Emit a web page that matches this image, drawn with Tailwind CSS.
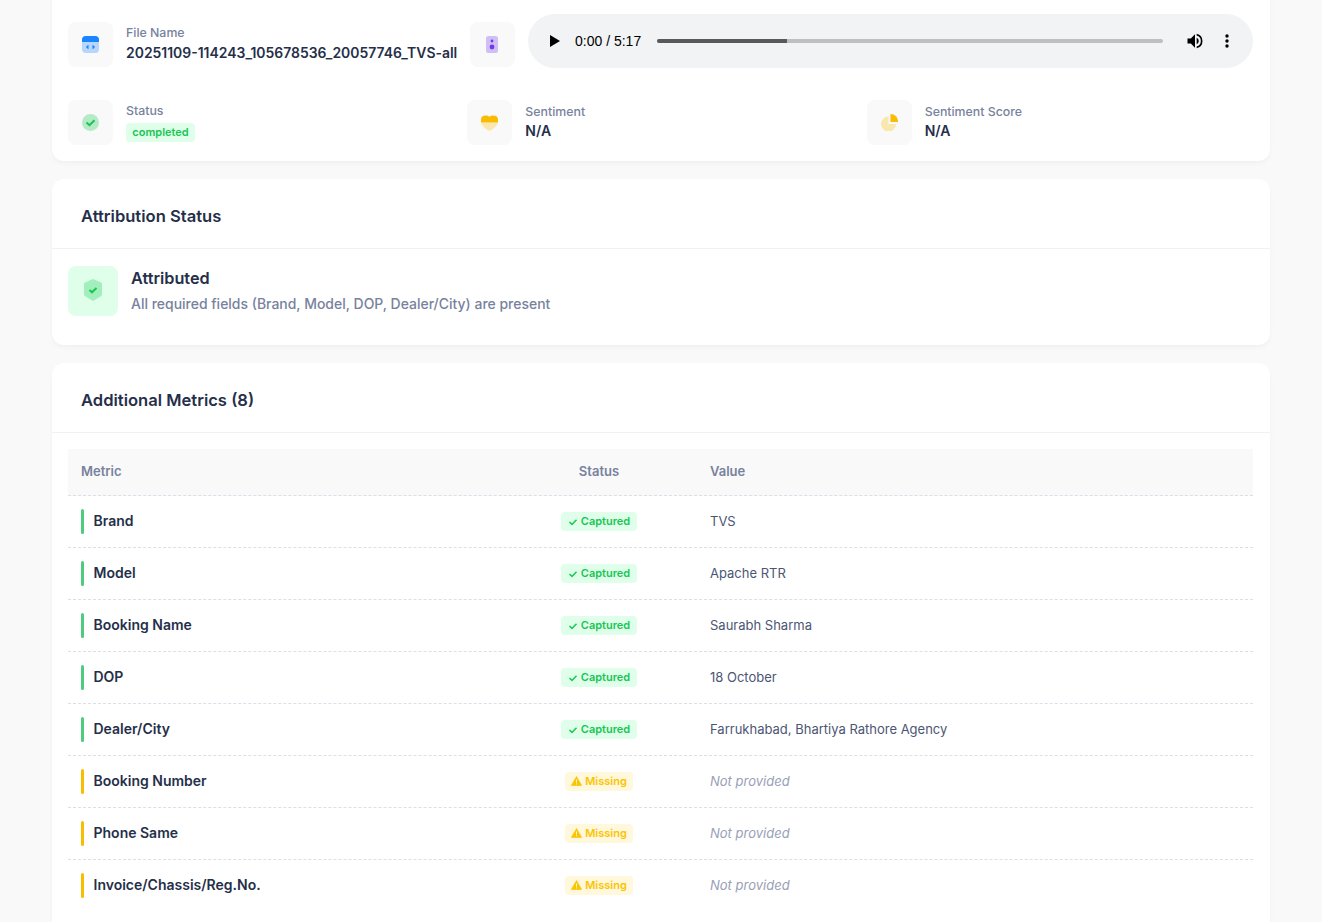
<!DOCTYPE html>
<html lang="en">
<head>
    <meta charset="UTF-8">
    <title>Call Details</title>
    <script src="https://cdn.jsdelivr.net/npm/@tailwindcss/browser@4"></script>
</head>
<body class="bg-[#f9f9f9] font-['Inter',sans-serif] text-[#252f4a] h-[922px] overflow-hidden">
    <div class="mx-[52px] w-[1218px]">

        <!-- Call info card -->
        <div class="-mt-[20px] bg-white rounded-xl shadow-[0_3px_4px_rgba(0,0,0,0.03)] pl-4 pr-[17px] pt-[34px] pb-4">
            <div class="flex items-center h-[54px]">
                <div class="mt-[7px] w-[45px] h-[45px] rounded-lg bg-[#f9f9f9] flex items-center justify-center shrink-0">
                    <svg width="17" height="17" viewBox="0 0 17 17"><rect width="17" height="17" rx="4" fill="#1b84ff" fill-opacity=".3"/><path d="M0 6V4a4 4 0 0 1 4-4h9a4 4 0 0 1 4 4v2z" fill="#1b84ff"/><path d="M6.500 9.500 5 11l1.500 1.500M10.500 9.500 12 11l-1.500 1.500" stroke="#1b84ff" stroke-width="1.500" fill="none"/></svg>
                </div>
                <div class="mt-[6px] ml-[13px] w-[343px] shrink-0">
                    <div class="text-[12.35px] font-medium leading-[16px] text-[#78829d]">File Name</div>
                    <div class="text-[13.95px] font-semibold leading-[20px] mt-[2px] whitespace-nowrap">20251109-114243_105678536_20057746_TVS-all</div>
                </div>
                <div class="mt-[7px] w-[45px] h-[45px] rounded-lg bg-[#f9f9f9] flex items-center justify-center shrink-0 ml-[1px]">
                    <svg class="-ml-[2px]" width="12" height="17" viewBox="0 0 12 17"><rect width="12" height="17" rx="2.500" fill="#7239ea" fill-opacity=".3"/><circle cx="6" cy="5" r="1.400" fill="#7239ea"/><circle cx="6" cy="11" r="2.400" fill="#7239ea"/></svg>
                </div>
                <!-- Audio player -->
                <div class="ml-[13px] w-[725px] h-[54px] rounded-[27px] bg-[#f1f3f4] flex items-center font-['Liberation_Sans',sans-serif] text-black">
                    <svg class="ml-[22px]" width="10" height="12" viewBox="0 0 10 12"><path d="M0 0v12l10-6z" fill="#000"/></svg>
                    <span class="ml-[15px] text-sm leading-none whitespace-nowrap w-[66px]">0:00 / 5:17</span>
                    <div class="ml-4 w-[506px] h-1 rounded-full bg-[#bfbfbf] overflow-hidden">
                        <div class="w-[130px] h-1 bg-[#595959]"></div>
                    </div>
                    <svg class="ml-[22px]" width="20" height="20" viewBox="0 0 24 24"><path d="M3 9v6h4l5 5V4L7 9zm13.500 3A4.500 4.500 0 0 0 14 7.970v8.050A4.500 4.500 0 0 0 16.500 12zM14 3.230v2.060a7 7 0 0 1 0 13.420v2.060a9 9 0 0 0 0-17.540z" fill="#000"/></svg>
                    <svg class="ml-[20px]" width="4" height="14" viewBox="0 0 4 14"><circle cx="2" cy="2" r="1.700"/><circle cx="2" cy="7" r="1.700"/><circle cx="2" cy="12" r="1.700"/></svg>
                </div>
            </div>
            <div class="grid grid-cols-3 gap-[13px] mt-[32px]">
                <div class="flex items-center">
                    <div class="w-[45px] h-[45px] rounded-lg bg-[#f9f9f9] flex items-center justify-center shrink-0">
                        <svg width="17" height="17" viewBox="0 0 17 17"><circle cx="8.500" cy="8.500" r="8.500" fill="#17c653" fill-opacity=".3"/><path d="m4.500 8.500 3 2.700 5-5" stroke="#17c653" stroke-width="2" fill="none"/></svg>
                    </div>
                    <div class="ml-[13px]">
                        <div class="text-[12.35px] font-medium leading-[16px] text-[#78829d]">Status</div>
                        <div class="mt-[4px] h-[19px] w-[69px] rounded bg-[#dfffea] text-[#17c653] text-[11px] font-semibold leading-[19px] text-center">completed</div>
                    </div>
                </div>
                <div class="flex items-center">
                    <div class="w-[45px] h-[45px] rounded-lg bg-[#f9f9f9] flex items-center justify-center shrink-0">
                        <svg width="17" height="16" viewBox="0 0 17 16"><path d="M0 7.500h17c-.5 3-4.500 6.500-8.500 8.500C4.500 14 .5 10.500 0 7.500z" fill="#f8bc00" fill-opacity=".3"/><path d="M0 7.500V4.500C0 2 2 .5 4.500.5c1.700 0 3 .4 4 1.200 1-.8 2.300-1.200 4-1.200C15 .5 17 2 17 4.500v3z" fill="#f8bc00"/></svg>
                    </div>
                    <div class="ml-[13px]">
                        <div class="text-[12.35px] font-medium leading-[16px] text-[#78829d]">Sentiment</div>
                        <div class="text-sm font-semibold leading-[20px] mt-[1px]">N/A</div>
                    </div>
                </div>
                <div class="flex items-center">
                    <div class="w-[45px] h-[45px] rounded-lg bg-[#f9f9f9] flex items-center justify-center shrink-0">
                        <svg width="17" height="17" viewBox="0 0 17 17"><path d="M7.500 2.500a7.500 7.500 0 1 0 7.500 7.500H7.500z" fill="#f8bc00" fill-opacity=".3"/><path d="M9.500 0A7.500 7.500 0 0 1 17 8H9.500z" fill="#f8bc00"/></svg>
                    </div>
                    <div class="ml-[13px]">
                        <div class="text-[12.35px] font-medium leading-[16px] text-[#78829d]">Sentiment Score</div>
                        <div class="text-sm font-semibold leading-[20px] mt-[1px]">N/A</div>
                    </div>
                </div>
            </div>
        </div>

        <!-- Attribution Status -->
        <div class="mt-[18px] h-[166px] bg-white rounded-xl shadow-[0_3px_4px_rgba(0,0,0,0.03)]">
            <div class="h-[70px] px-[29px] pt-[6px] flex items-center border-b border-[#f1f1f4]">
                <h3 class="text-[16.575px] font-semibold">Attribution Status</h3>
            </div>
            <div class="flex px-4 pt-[17px]">
                <div class="w-[50px] h-[50px] rounded-lg bg-[#dfffea] flex items-center justify-center shrink-0">
                    <svg class="-mt-[2px]" width="18" height="22" viewBox="0 0 18 22"><path d="M9 0l8 3.500a1.500 1.500 0 0 1 1 1.400v10.600a2 2 0 0 1-.8 1.500L9 22 .8 17A2 2 0 0 1 0 15.500V4.900a1.500 1.500 0 0 1 1-1.400z" fill="#17c653" fill-opacity=".3"/><path d="m5.500 11 2.500 2.300 4.500-4.300" stroke="#17c653" stroke-width="2" fill="none"/></svg>
                </div>
                <div class="ml-[13px]">
                    <div class="text-[16.25px] font-semibold leading-[24px]">Attributed</div>
                    <div class="text-[13.975px] font-medium text-[#78829d] leading-[20px] mt-[4px]">All required fields (Brand, Model, DOP, Dealer/City) are present</div>
                </div>
            </div>
        </div>

        <!-- Additional Metrics -->
        <div class="mt-[18px] bg-white rounded-xl shadow-[0_3px_4px_rgba(0,0,0,0.03)]">
            <div class="h-[70px] px-[29px] pt-[6px] flex items-center border-b border-[#f1f1f4]">
                <h3 class="text-[16.575px] font-semibold">Additional Metrics (8)</h3>
            </div>
            <div class="pl-4 pr-[17px] pt-4 pb-10">
                <div class="grid grid-cols-[433px_196px_1fr] h-[47px] items-center bg-[#f9f9f9] border-b border-dashed border-[#dbdfe9] text-[13px] font-semibold text-[#78829d]">
                    <div class="pl-[13px]">Metric</div>
                    <div class="text-center">Status</div>
                    <div class="pl-[13px]">Value</div>
                </div>

                <div class="grid grid-cols-[433px_196px_1fr] h-[52px] items-center border-b border-dashed border-[#dbdfe9]">
                    <div class="pl-[13px] flex items-center"><span class="w-[3px] h-[25px] rounded-sm bg-[#4fcb80]"></span><span class="ml-[9.5px] -mt-[2px] text-sm font-semibold">Brand</span></div>
                    <div class="flex justify-center"><span class="h-[19px] rounded bg-[#dfffea] text-[#17c653] text-[11px] font-semibold px-[7px] flex items-center gap-[3px]"><svg width="10" height="10" viewBox="0 0 10 10"><path d="m1.500 5 2.500 2.400 4.500-4.600" stroke="#17c653" stroke-width="1.500" fill="none"/></svg>Captured</span></div>
                    <div class="pl-[13px] text-[13px] text-[#4b5675]">TVS</div>
                </div>
                <div class="grid grid-cols-[433px_196px_1fr] h-[52px] items-center border-b border-dashed border-[#dbdfe9]">
                    <div class="pl-[13px] flex items-center"><span class="w-[3px] h-[25px] rounded-sm bg-[#4fcb80]"></span><span class="ml-[9.5px] -mt-[2px] text-sm font-semibold">Model</span></div>
                    <div class="flex justify-center"><span class="h-[19px] rounded bg-[#dfffea] text-[#17c653] text-[11px] font-semibold px-[7px] flex items-center gap-[3px]"><svg width="10" height="10" viewBox="0 0 10 10"><path d="m1.500 5 2.500 2.400 4.500-4.600" stroke="#17c653" stroke-width="1.500" fill="none"/></svg>Captured</span></div>
                    <div class="pl-[13px] text-[13px] text-[#4b5675]">Apache RTR</div>
                </div>
                <div class="grid grid-cols-[433px_196px_1fr] h-[52px] items-center border-b border-dashed border-[#dbdfe9]">
                    <div class="pl-[13px] flex items-center"><span class="w-[3px] h-[25px] rounded-sm bg-[#4fcb80]"></span><span class="ml-[9.5px] -mt-[2px] text-sm font-semibold">Booking Name</span></div>
                    <div class="flex justify-center"><span class="h-[19px] rounded bg-[#dfffea] text-[#17c653] text-[11px] font-semibold px-[7px] flex items-center gap-[3px]"><svg width="10" height="10" viewBox="0 0 10 10"><path d="m1.500 5 2.500 2.400 4.500-4.600" stroke="#17c653" stroke-width="1.500" fill="none"/></svg>Captured</span></div>
                    <div class="pl-[13px] text-[13px] text-[#4b5675]">Saurabh Sharma</div>
                </div>
                <div class="grid grid-cols-[433px_196px_1fr] h-[52px] items-center border-b border-dashed border-[#dbdfe9]">
                    <div class="pl-[13px] flex items-center"><span class="w-[3px] h-[25px] rounded-sm bg-[#4fcb80]"></span><span class="ml-[9.5px] -mt-[2px] text-sm font-semibold">DOP</span></div>
                    <div class="flex justify-center"><span class="h-[19px] rounded bg-[#dfffea] text-[#17c653] text-[11px] font-semibold px-[7px] flex items-center gap-[3px]"><svg width="10" height="10" viewBox="0 0 10 10"><path d="m1.500 5 2.500 2.400 4.500-4.600" stroke="#17c653" stroke-width="1.500" fill="none"/></svg>Captured</span></div>
                    <div class="pl-[13px] text-[13px] text-[#4b5675]">18 October</div>
                </div>
                <div class="grid grid-cols-[433px_196px_1fr] h-[52px] items-center border-b border-dashed border-[#dbdfe9]">
                    <div class="pl-[13px] flex items-center"><span class="w-[3px] h-[25px] rounded-sm bg-[#4fcb80]"></span><span class="ml-[9.5px] -mt-[2px] text-sm font-semibold">Dealer/City</span></div>
                    <div class="flex justify-center"><span class="h-[19px] rounded bg-[#dfffea] text-[#17c653] text-[11px] font-semibold px-[7px] flex items-center gap-[3px]"><svg width="10" height="10" viewBox="0 0 10 10"><path d="m1.500 5 2.500 2.400 4.500-4.600" stroke="#17c653" stroke-width="1.500" fill="none"/></svg>Captured</span></div>
                    <div class="pl-[13px] text-[13px] text-[#4b5675]">Farrukhabad, Bhartiya Rathore Agency</div>
                </div>
                <div class="grid grid-cols-[433px_196px_1fr] h-[52px] items-center border-b border-dashed border-[#dbdfe9]">
                    <div class="pl-[13px] flex items-center"><span class="w-[3px] h-[25px] rounded-sm bg-[#f8bc00]"></span><span class="ml-[9.5px] -mt-[2px] text-sm font-semibold">Booking Number</span></div>
                    <div class="flex justify-center"><span class="h-[19px] rounded bg-[#fff8dd] text-[#fcc400] text-[11px] font-semibold px-[6px] flex items-center gap-[3px]"><svg class="-mt-[1px]" width="11" height="10" viewBox="0 0 11 10"><path d="M5.500.5 10.700 9.500H.3z" fill="#fcc400" stroke="#fcc400" stroke-linejoin="round" stroke-width=".6"/><path d="M5.500 3.500v3M5.500 7.300v1" stroke="#fff8dd" stroke-width="1"/></svg>Missing</span></div>
                    <div class="pl-[13px] text-[13px] italic text-[#99a1b7]">Not provided</div>
                </div>
                <div class="grid grid-cols-[433px_196px_1fr] h-[52px] items-center border-b border-dashed border-[#dbdfe9]">
                    <div class="pl-[13px] flex items-center"><span class="w-[3px] h-[25px] rounded-sm bg-[#f8bc00]"></span><span class="ml-[9.5px] -mt-[2px] text-sm font-semibold">Phone Same</span></div>
                    <div class="flex justify-center"><span class="h-[19px] rounded bg-[#fff8dd] text-[#fcc400] text-[11px] font-semibold px-[6px] flex items-center gap-[3px]"><svg class="-mt-[1px]" width="11" height="10" viewBox="0 0 11 10"><path d="M5.500.5 10.700 9.500H.3z" fill="#fcc400" stroke="#fcc400" stroke-linejoin="round" stroke-width=".6"/><path d="M5.500 3.500v3M5.500 7.300v1" stroke="#fff8dd" stroke-width="1"/></svg>Missing</span></div>
                    <div class="pl-[13px] text-[13px] italic text-[#99a1b7]">Not provided</div>
                </div>
                <div class="grid grid-cols-[433px_196px_1fr] h-[52px] items-center border-b border-transparent">
                    <div class="pl-[13px] flex items-center"><span class="w-[3px] h-[25px] rounded-sm bg-[#f8bc00]"></span><span class="ml-[9.5px] -mt-[2px] text-sm font-semibold">Invoice/Chassis/Reg.No.</span></div>
                    <div class="flex justify-center"><span class="h-[19px] rounded bg-[#fff8dd] text-[#fcc400] text-[11px] font-semibold px-[6px] flex items-center gap-[3px]"><svg class="-mt-[1px]" width="11" height="10" viewBox="0 0 11 10"><path d="M5.500.5 10.700 9.500H.3z" fill="#fcc400" stroke="#fcc400" stroke-linejoin="round" stroke-width=".6"/><path d="M5.500 3.500v3M5.500 7.300v1" stroke="#fff8dd" stroke-width="1"/></svg>Missing</span></div>
                    <div class="pl-[13px] text-[13px] italic text-[#99a1b7]">Not provided</div>
                </div>
            </div>
        </div>
    </div>
</body>
</html>
